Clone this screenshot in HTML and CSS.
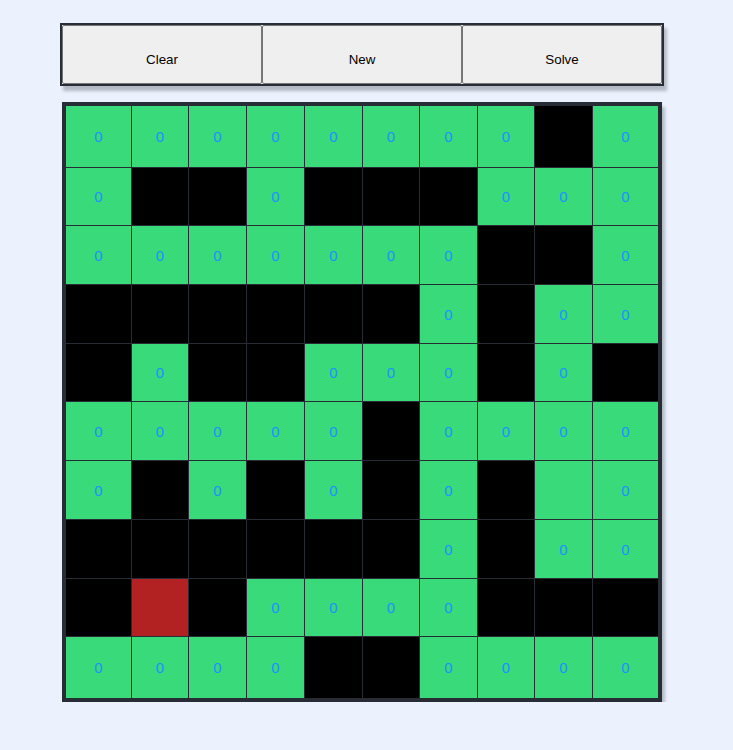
FILE: index.html
```html
<!DOCTYPE html>
<html lang="en">
<head>
  <meta charset="UTF-8">
  <title>Maze Solver</title>
  <link rel="stylesheet" href="styles.css">
</head>
<body>
  <div id="app">
    <div id="controls">
      <button class="ctrl">Clear</button>
      <button class="ctrl">New</button>
      <button class="ctrl">Solve</button>
    </div>
    <div id="board">
      <div class="cell open">0</div><div class="cell open">0</div><div class="cell open">0</div><div class="cell open">0</div><div class="cell open">0</div><div class="cell open">0</div><div class="cell open">0</div><div class="cell open">0</div><div class="cell wall"></div><div class="cell open">0</div>
      <div class="cell open">0</div><div class="cell wall"></div><div class="cell wall"></div><div class="cell open">0</div><div class="cell wall"></div><div class="cell wall"></div><div class="cell wall"></div><div class="cell open">0</div><div class="cell open">0</div><div class="cell open">0</div>
      <div class="cell open">0</div><div class="cell open">0</div><div class="cell open">0</div><div class="cell open">0</div><div class="cell open">0</div><div class="cell open">0</div><div class="cell open">0</div><div class="cell wall"></div><div class="cell wall"></div><div class="cell open">0</div>
      <div class="cell wall"></div><div class="cell wall"></div><div class="cell wall"></div><div class="cell wall"></div><div class="cell wall"></div><div class="cell wall"></div><div class="cell open">0</div><div class="cell wall"></div><div class="cell open">0</div><div class="cell open">0</div>
      <div class="cell wall"></div><div class="cell open">0</div><div class="cell wall"></div><div class="cell wall"></div><div class="cell open">0</div><div class="cell open">0</div><div class="cell open">0</div><div class="cell wall"></div><div class="cell open">0</div><div class="cell wall"></div>
      <div class="cell open">0</div><div class="cell open">0</div><div class="cell open">0</div><div class="cell open">0</div><div class="cell open">0</div><div class="cell wall"></div><div class="cell open">0</div><div class="cell open">0</div><div class="cell open">0</div><div class="cell open">0</div>
      <div class="cell open">0</div><div class="cell wall"></div><div class="cell open">0</div><div class="cell wall"></div><div class="cell open">0</div><div class="cell wall"></div><div class="cell open">0</div><div class="cell wall"></div><div class="cell open"></div><div class="cell open">0</div>
      <div class="cell wall"></div><div class="cell wall"></div><div class="cell wall"></div><div class="cell wall"></div><div class="cell wall"></div><div class="cell wall"></div><div class="cell open">0</div><div class="cell wall"></div><div class="cell open">0</div><div class="cell open">0</div>
      <div class="cell wall"></div><div class="cell start"></div><div class="cell wall"></div><div class="cell open">0</div><div class="cell open">0</div><div class="cell open">0</div><div class="cell open">0</div><div class="cell wall"></div><div class="cell wall"></div><div class="cell wall"></div>
      <div class="cell open">0</div><div class="cell open">0</div><div class="cell open">0</div><div class="cell open">0</div><div class="cell wall"></div><div class="cell wall"></div><div class="cell open">0</div><div class="cell open">0</div><div class="cell open">0</div><div class="cell open">0</div>
    </div>
  </div>
</body>
</html>
```

FILE: styles.css
```css
body {
  margin:0;
  background:#ebf2fe;
}

#app {
  display:flex;
  flex-direction:column;
  align-items:center;
  width:604px;
  padding:23px 0 0 60px;
}

#controls {
  display:flex;
  width:600px;
  border:solid 2px #282c34;
  box-shadow:3px 5px 3px rgba(40,44,52,.28);
}

.ctrl {
  width:200px;
  height:59px;
  margin:0;
  padding:9px 0 0 0;
  background:#efefef;
  color:#000;
  border:solid 1px #767676;
  border-radius:2px;
  font-family:"Liberation Sans", Arial, sans-serif;
  font-size:13.333px;
}

#board {
  display:grid;
  grid-template-columns:65px 56px 57px 57px 57px 56px 57px 56px 57px 65px;
  grid-template-rows:61px 57px 58px 58px 57px 58px 58px 58px 57px 61px;
  gap:1px;
  width:592px;
  margin-top:16px;
  background:#282c34;
  border:solid 4px #282c34;
  box-shadow:3px 5px 3px rgba(40,44,52,.28);
}

.cell {
  display:flex;
  align-items:center;
  justify-content:center;
  font-family:"Liberation Sans", Arial, sans-serif;
  font-size:15px;
  color:#1e90ff;
}

.open {
  background:#39da7a;
}

.wall {
  background:#000;
}

.start {
  background:#b22222;
}
```
